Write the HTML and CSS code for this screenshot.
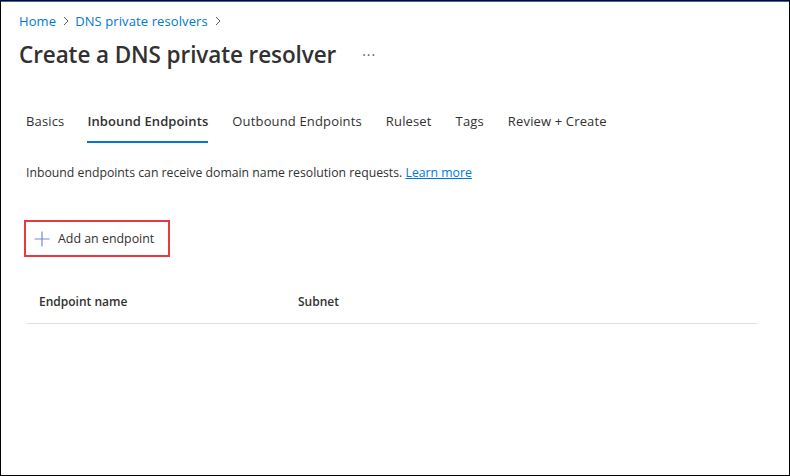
FILE: index.html
```html
<!DOCTYPE html>
<html>
<head>
<meta charset="utf-8">
<link rel="stylesheet" href="styles.css">
</head>
<body>
<div class="frame">
  <div class="accent"></div>
  <div class="page">
    <nav class="crumbs">
      <a class="crumb">Home</a>
      <span class="chev"><svg width="8" height="10" viewBox="0 0 8 10"><path d="M2 1l4 4-4 4" fill="none" stroke="#605e5c" stroke-width="1"/></svg></span>
      <a class="crumb">DNS private resolvers</a>
      <span class="chev"><svg width="8" height="10" viewBox="0 0 8 10"><path d="M2 1l4 4-4 4" fill="none" stroke="#605e5c" stroke-width="1"/></svg></span>
    </nav>
    <div class="title-row">
      <h1 class="title">Create a DNS private resolver</h1>
      <span class="more">···</span>
    </div>
    <div class="tabs">
      <span class="tab">Basics</span>
      <span class="tab active">Inbound Endpoints</span>
      <span class="tab">Outbound Endpoints</span>
      <span class="tab">Ruleset</span>
      <span class="tab">Tags</span>
      <span class="tab">Review + Create</span>
    </div>
    <p class="desc">Inbound endpoints can receive domain name resolution requests. <a class="link">Learn more</a></p>
    <div class="add-wrap">
      <button class="add">
        <svg width="16" height="16" viewBox="0 0 16 16"><path d="M8 0.5v15M0.5 8h15" stroke="#6a8fd8" stroke-width="1.2" fill="none"/></svg>
        <span>Add an endpoint</span>
      </button>
    </div>
    <div class="table">
      <div class="thead">
        <span class="th c1">Endpoint name</span>
        <span class="th c2">Subnet</span>
      </div>
    </div>
  </div>
</div>
</body>
</html>
```

FILE: styles.css
```css
* { box-sizing: border-box; }
html, body { margin: 0; padding: 0; background: #fff; }
body {
  font-family: "Open Sans", "Noto Sans", sans-serif;
  color: #323130;
  width: 790px;
  height: 476px;
  overflow: hidden;
}
.frame {
  width: 790px;
  height: 476px;
  border: 1px solid #000;
  display: flex;
  flex-direction: column;
}
.accent { height: 1px; background: #0078d4; }
.page { padding: 0 0 0 18px; }
.crumbs {
  display: flex;
  align-items: center;
  height: 24px;
  margin-top: 7px;
  font-size: 13px;
  letter-spacing: 0.1px;
}
.crumb { color: #0078d4; }
.chev { display: inline-flex; margin: 0 5px 0 6px; }
.title-row { display: flex; align-items: center; margin-top: 6px; height: 30px; }
.title {
  margin: 0;
  font-size: 22.5px;
  font-weight: 600;
  color: #323130;
  letter-spacing: -0.1px;
}
.more { margin-left: 26px; color: #605e5c; font-size: 14px; letter-spacing: 1px; }
.tabs {
  display: flex;
  gap: 24px;
  margin-top: 43px;
  padding-left: 7px;
  font-size: 13px;
  letter-spacing: 0.15px;
}
.tab {
  padding-bottom: 11px;
  border-bottom: 2px solid transparent;
  line-height: 18px;
}
.tab.active { font-weight: 600; border-bottom-color: #0078d4; letter-spacing: 0.1px; margin-left: -1px; }
.desc {
  margin: 21px 0 0 7px;
  font-size: 12.25px;
  line-height: 18px;
}
.link { color: #0078d4; text-decoration: underline; }
.add-wrap { margin-top: 38px; padding-left: 5px; }
.add {
  display: flex;
  align-items: center;
  gap: 8px;
  width: 146px;
  height: 37px;
  border: 2px solid #e8393f;
  background: #fff;
  padding: 0 0 0 8px;
  font-family: inherit;
  font-size: 12.4px;
  color: #323130;
}
.table { margin: 36px 0 0 8px; width: 730px; }
.thead {
  display: flex;
  height: 31px;
  align-items: flex-start;
  border-bottom: 1px solid #e1dfdd;
  font-size: 12px;
  font-weight: 600;
}
.th.c1 { width: 271px; padding-left: 12px; }
```
